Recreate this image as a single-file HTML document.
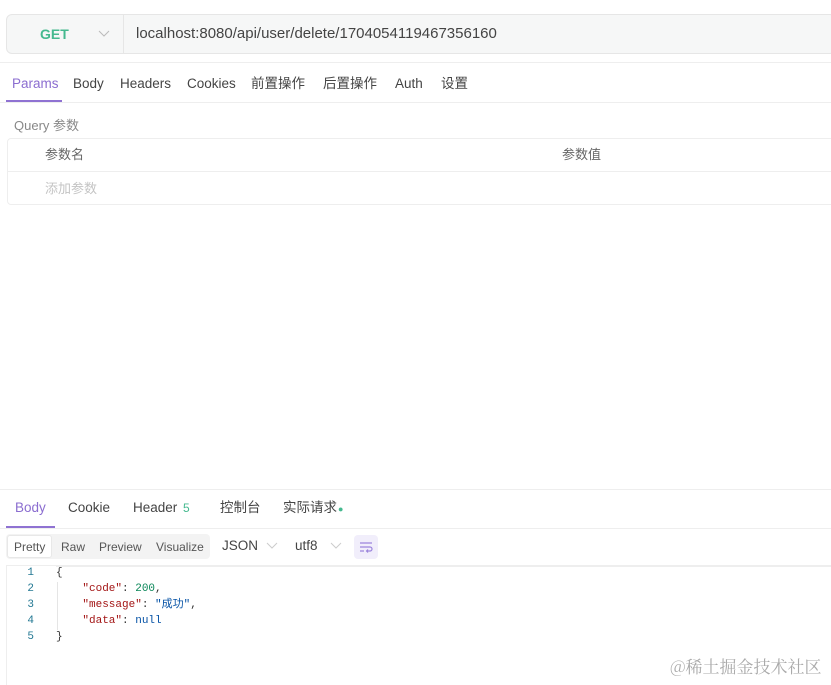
<!DOCTYPE html>
<html><head><meta charset="utf-8"><style>
*{margin:0;padding:0;box-sizing:border-box}
body{width:831px;height:684px;background:#fff;position:relative;overflow:hidden;font-family:"Liberation Sans","Noto Sans CJK SC",sans-serif;color:#333}
.a{position:absolute;white-space:nowrap;line-height:18px}
.t{font-size:13.5px;color:#444}
.mono{font-family:"Liberation Mono","Noto Sans CJK SC",monospace;font-size:11px}
</style></head><body>
<div class="a" style="left:6px;top:14px;width:830px;height:40px;background:#f6f7f7;border:1px solid #e6e6e6;border-radius:6px"></div>
<div class="a" style="left:123px;top:15px;width:1px;height:38px;background:#e6e6e6"></div>
<div class="a" style="left:40px;top:25px;font-size:14px;font-weight:bold;color:#45b98f">GET</div>
<svg class="a" style="left:98px;top:29px" width="12" height="10"><path d="M1 2 L6 7 L11 2" fill="none" stroke="#bbb" stroke-width="1"/></svg>
<div class="a" style="left:136px;top:25px;font-size:15px;color:#444">localhost:8080/api/user/delete/1704054119467356160</div>
<div class="a" style="left:0;top:62px;width:831px;height:1px;background:#eee"></div>
<div class="a t" style="left:12px;top:75px;color:#8b6dd0">Params</div>
<div class="a t" style="left:73px;top:75px">Body</div>
<div class="a t" style="left:120px;top:75px">Headers</div>
<div class="a t" style="left:187px;top:75px">Cookies</div>
<div class="a t" style="left:251px;top:75px">前置操作</div>
<div class="a t" style="left:323px;top:75px">后置操作</div>
<div class="a t" style="left:395px;top:75px">Auth</div>
<div class="a t" style="left:441px;top:75px">设置</div>
<div class="a" style="left:6px;top:100px;width:56px;height:2px;background:#8f72d2"></div>
<div class="a" style="left:0;top:102px;width:831px;height:1px;background:#eee"></div>
<div class="a" style="left:14px;top:117px;font-size:13px;color:#888">Query 参数</div>
<div class="a" style="left:7px;top:138px;width:830px;height:67px;border:1px solid #eee;border-radius:4px"></div>
<div class="a" style="left:7px;top:171px;width:830px;height:1px;background:#eee"></div>
<div class="a" style="left:45px;top:146px;font-size:13px;color:#666">参数名</div>
<div class="a" style="left:562px;top:146px;font-size:13px;color:#666">参数值</div>
<div class="a" style="left:45px;top:180px;font-size:13px;color:#c4c4c4">添加参数</div>
<div class="a" style="left:0;top:489px;width:831px;height:1px;background:#eee"></div>
<div class="a t" style="left:15px;top:499px;color:#8b6dd0">Body</div>
<div class="a t" style="left:68px;top:499px">Cookie</div>
<div class="a t" style="left:133px;top:499px">Header <span style="color:#45b98f;font-size:12px;margin-left:2px">5</span></div>
<div class="a t" style="left:220px;top:499px">控制台</div>
<div class="a t" style="left:283px;top:499px">实际请求<span style="color:#45b98f;font-size:9px;margin-left:1px">●</span></div>
<div class="a" style="left:6px;top:526px;width:49px;height:2px;background:#8f72d2"></div>
<div class="a" style="left:0;top:528px;width:831px;height:1px;background:#eee"></div>
<div class="a" style="left:6px;top:534px;width:204px;height:25px;background:#f3f3f3;border-radius:4px"></div>
<div class="a" style="left:7px;top:535px;width:45px;height:23px;background:#fff;border:1px solid #e8e8e8;border-radius:3px"></div>
<div class="a" style="left:14px;top:538px;font-size:12px;color:#555">Pretty</div>
<div class="a" style="left:61px;top:538px;font-size:12px;color:#555">Raw</div>
<div class="a" style="left:99px;top:538px;font-size:12px;color:#555">Preview</div>
<div class="a" style="left:156px;top:538px;font-size:12px;color:#555">Visualize</div>
<div class="a" style="left:222px;top:537px;font-size:13.5px;color:#444">JSON</div>
<svg class="a" style="left:266px;top:541px" width="12" height="10"><path d="M1 2 L6 7 L11 2" fill="none" stroke="#ccc"/></svg>
<div class="a" style="left:295px;top:537px;font-size:13.5px;color:#444">utf8</div>
<svg class="a" style="left:330px;top:541px" width="12" height="10"><path d="M1 2 L6 7 L11 2" fill="none" stroke="#ccc"/></svg>
<div class="a" style="left:354px;top:535px;width:24px;height:24px;background:#f1eefb;border-radius:4px"></div>
<svg class="a" style="left:359px;top:540px" width="14" height="14"><path d="M1 3H13M1 7H11a2 2 0 0 1 0 4H8M1 11H5M9 9.5L7.5 11 9 12.5" fill="none" stroke="#9c85dc" stroke-width="1.2"/></svg>
<div class="a" style="left:6px;top:565px;width:830px;height:1px;background:#eee"></div>
<div class="a" style="left:56px;top:566px;width:780px;height:1px;background:#eee"></div>
<div class="a" style="left:6px;top:565px;width:1px;height:120px;background:#eee"></div>
<div class="a" style="left:57px;top:582px;width:1px;height:48px;background:#e5e5e5"></div>
<div class="a mono" style="left:20px;top:565px;line-height:16px;color:#237893;text-align:right;width:14px">1<br>2<br>3<br>4<br>5</div>
<div class="a mono" style="left:56px;top:565px;line-height:16px;color:#333">{<br>&nbsp;&nbsp;&nbsp;&nbsp;<span style="color:#a31515">"code"</span>: <span style="color:#098658">200</span>,<br>&nbsp;&nbsp;&nbsp;&nbsp;<span style="color:#a31515">"message"</span>: <span style="color:#0451a5">"成功"</span>,<br>&nbsp;&nbsp;&nbsp;&nbsp;<span style="color:#a31515">"data"</span>: <span style="color:#0451a5">null</span><br>}</div>
<div class="a" style="left:670px;top:656px;font-size:17px;line-height:20px;color:#aaa;font-family:'Noto Serif CJK SC',serif">@稀土掘金技术社区</div>
</body></html>
